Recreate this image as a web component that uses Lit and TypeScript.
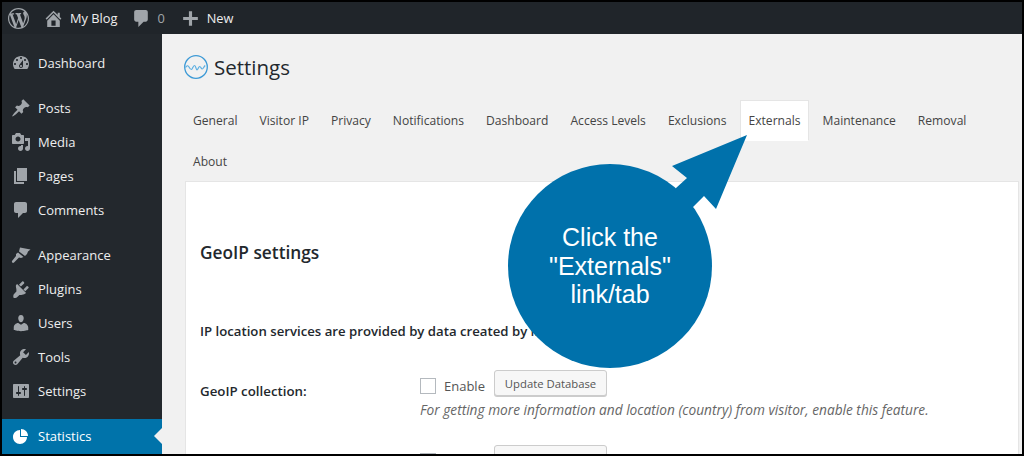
import { LitElement, html, css, svg } from "lit";
import { customElement } from "lit/decorators.js";

const I: Record<string, string> = {
  wp: "M20 10c0-5.51-4.49-10-10-10C4.48 0 0 4.49 0 10c0 5.52 4.48 10 10 10 5.51 0 10-4.48 10-10zM7.78 15.37L4.37 6.22c.55-.02 1.17-.08 1.17-.08.5-.06.44-1.13-.06-1.11 0 0-1.45.11-2.37.11-.18 0-.37 0-.58-.01C4.12 2.69 6.87 1.11 10 1.11c2.33 0 4.45.87 6.05 2.34-.68-.11-1.65.39-1.65 1.58 0 .74.45 1.36.9 2.1.35.61.55 1.36.55 2.46 0 1.49-1.4 5-1.4 5l-3.03-8.37c.54-.02.82-.17.82-.17.5-.05.44-1.25-.06-1.22 0 0-1.44.12-2.38.12-.87 0-2.33-.12-2.33-.12-.5-.03-.56 1.2-.06 1.22l.92.08 1.26 3.41zM17.41 10c.24-.64.74-1.87.43-4.25.7 1.29 1.05 2.71 1.05 4.25 0 3.29-1.73 6.24-4.4 7.78.97-2.59 1.94-5.2 2.92-7.78zM6.1 18.09C3.12 16.65 1.11 13.53 1.11 10c0-1.3.23-2.48.72-3.59C3.25 10.3 4.67 14.2 6.1 18.09zm4.03-6.63l2.58 6.98c-.86.29-1.76.45-2.71.45-.79 0-1.57-.11-2.29-.33.81-2.38 1.62-4.74 2.42-7.1z",
  home: "M16 8.5l1.53 1.53-1.06 1.06L10 4.62l-6.47 6.47-1.06-1.06L10 2.5l4 4v-2h2v4zm-6-2.46l6 5.99V18H4v-5.97zM12 17v-5H8v5h4z",
  comment: "M5 2h9c1.1 0 2 .9 2 2v7c0 1.1-.9 2-2 2h-2l-5 5v-5H5c-1.1 0-2-.9-2-2V4c0-1.1.9-2 2-2z",
  plus: "M17 8.5v3h-5.5V17h-3v-5.5H3v-3h5.5V3h3v5.5z",
  dashboard: "M3.76 16h12.48c1.1-1.37 1.76-3.11 1.76-5 0-4.42-3.58-8-8-8s-8 3.58-8 8c0 1.89.66 3.63 1.76 5zM10 4c.55 0 1 .45 1 1s-.45 1-1 1-1-.45-1-1 .45-1 1-1zM6 6c.55 0 1 .45 1 1s-.45 1-1 1-1-.45-1-1 .45-1 1-1zm8 0c.55 0 1 .45 1 1s-.45 1-1 1-1-.45-1-1 .45-1 1-1zm-5.37 5.55L12 7v6c0 1.1-.9 2-2 2s-2-.9-2-2c0-.57.24-1.08.63-1.45zM4 10c.55 0 1 .45 1 1s-.45 1-1 1-1-.45-1-1 .45-1 1-1zm12 0c.55 0 1 .45 1 1s-.45 1-1 1-1-.45-1-1 .45-1 1-1zm-5 3c0-.55-.45-1-1-1s-1 .45-1 1 .45 1 1 1 1-.45 1-1z",
  post: "M10.44 3.02l1.82-1.82 6.36 6.35-1.83 1.82c-1.05-.68-2.48-.57-3.41.36l-.75.75c-.92.93-1.04 2.35-.35 3.41l-1.83 1.82-2.41-2.41-2.8 2.79c-.42.42-3.38 2.71-3.8 2.29s1.86-3.39 2.28-3.81l2.79-2.79L4.1 9.36l1.83-1.82c1.05.69 2.48.57 3.4-.36l.75-.75c.93-.92 1.05-2.35.36-3.41z",
  media: "M13 11V4c0-.55-.45-1-1-1h-1.67L9 1H5L3.67 3H2c-.55 0-1 .45-1 1v7c0 .55.45 1 1 1h10c.55 0 1-.45 1-1zM7 4.5c1.38 0 2.5 1.12 2.5 2.5S8.38 9.5 7 9.5 4.5 8.38 4.5 7 5.62 4.5 7 4.5zM14 6h5v10.5c0 1.38-1.12 2.5-2.5 2.5S14 17.88 14 16.5s1.12-2.5 2.5-2.5c.17 0 .34.02.5.05V9h-3V6zm-4 8.05V13h2v3.5c0 1.38-1.12 2.5-2.5 2.5S7 17.88 7 16.5 8.12 14 9.5 14c.17 0 .34.02.5.05z",
  page: "M6 15V2h10v13H6zm-1 1h8v2H3V5h2v11z",
  appearance: "M9 2.5L19.5 4.5 17 6.5 16 9l-2 2-6-4.5zM7 7.5L12.5 12 10 13l-2-.5-5 5c-1 1-2.5 0-2-1.5l4-5V9z",
  plugin: "M13.1 4.4L9.9 7.6 8 5.7l3.2-3.2c.35-.35 1.05-.2 1.55.3.5.5.65 1.2.35 1.6zM17.5 9.1l-3.2 3.2-1.9-1.9 3.2-3.2c.35-.35 1.05-.2 1.55.3.5.5.7 1.25.35 1.6zM5.1 6.1l1-1.1 9 9-1.2.8c-.7.7-2.6 1.2-3.7 1.2H8.4l-2.6 2.6c-.6.6-3.1.3-3.3.1-.3-.3-.3-2.8.3-3.4l2.6-2.7V10.8c0-1.1-1-4-.3-4.7z",
  users: "M10 9.25c-2.27 0-2.73-3.44-2.73-3.44C7 4.02 7.82 2 9.97 2c2.16 0 2.98 2.02 2.71 3.81 0 0-.41 3.44-2.68 3.44zm0 2.57L12.72 10c2.39 0 4.52 2.33 4.52 4.53v2.49s-3.65 1.13-7.24 1.13c-3.65 0-7.24-1.13-7.24-1.13v-2.49c0-2.25 1.94-4.48 4.47-4.48z",
  tools: "M16.68 9.77c-1.34 1.34-3.3 1.67-4.95.99l-5.41 6.52c-.99.99-2.59.99-3.58 0s-.99-2.59 0-3.57l6.52-5.42c-.68-1.65-.35-3.61.99-4.95 1.28-1.28 3.12-1.62 4.72-1.06l-2.89 2.89 2.82 2.82 2.86-2.87c.53 1.58.18 3.39-1.08 4.65zM3.81 16.21c.4.39 1.04.39 1.43 0 .4-.4.4-1.04 0-1.43-.39-.4-1.03-.4-1.43 0-.39.39-.39 1.03 0 1.43z",
  settings: "M18 16V4c0-.55-.45-1-1-1H3c-.55 0-1 .45-1 1v12c0 .55.45 1 1 1h14c.55 0 1-.45 1-1zM8 11h1c.55 0 1 .45 1 1s-.45 1-1 1H8v1.5c0 .28-.22.5-.5.5s-.5-.22-.5-.5V13H6c-.55 0-1-.45-1-1s.45-1 1-1h1V5.5c0-.28.22-.5.5-.5s.5.22.5.5V11zm5-2h-1c-.55 0-1-.45-1-1s.45-1 1-1h1V5.5c0-.28.22-.5.5-.5s.5.22.5.5V7h1c.55 0 1 .45 1 1s-.45 1-1 1h-1v5.5c0 .28-.22.5-.5.5s-.5-.22-.5-.5V9z",
  pie: "M10 10V3c3.87 0 7 3.13 7 7h-7zM9 11V4c-3.87 0-7 3.13-7 7s3.13 7 7 7 7-3.13 7-7H9z",
};

const icon = (name: string, cls = "ico") =>
  html`<svg class=${cls} viewBox="0 0 20 20" aria-hidden="true">${svg`<path fill-rule="evenodd" d=${I[name]}></path>`}</svg>`;

const menu: { label: string; icon: string; sep?: boolean; current?: boolean }[] = [
  { label: "Dashboard", icon: "dashboard" },
  { label: "Posts", icon: "post", sep: true },
  { label: "Media", icon: "media" },
  { label: "Pages", icon: "page" },
  { label: "Comments", icon: "comment" },
  { label: "Appearance", icon: "appearance", sep: true },
  { label: "Plugins", icon: "plugin" },
  { label: "Users", icon: "users" },
  { label: "Tools", icon: "tools" },
  { label: "Settings", icon: "settings" },
  { label: "Statistics", icon: "pie", sep: true, current: true },
];

const tabs = ["General", "Visitor IP", "Privacy", "Notifications", "Dashboard", "Access Levels", "Exclusions", "Externals", "Maintenance", "Removal", "About"];

@customElement("app-root")
export class AppRoot extends LitElement {
  static styles = css`
    :host {
      display: block;
      position: relative;
      width: 1024px;
      height: 456px;
      box-sizing: border-box;
      border: 2px solid #000;
      overflow: hidden;
      background: #f1f1f1;
      font-family: "Open Sans", "Noto Sans", sans-serif;
      font-size: 13px;
    }
    .bar {
      height: 32px;
      background: #20252a;
      display: flex;
      align-items: center;
      color: #eee;
      font-size: 12.8px;
    }
    .bar span { display: flex; align-items: center; }
    .bar .ico { width: 21px; height: 21px; fill: #a0a5aa; flex: none; }
    .bar .logo { width: 21px; height: 21px; margin-left: 6px; fill: #a0a5aa; flex: none; }
    .home { margin-left: 14px; }
    .blog { margin-left: 6px; }
    .cm { margin-left: 14px; }
    .count { margin-left: 5px; color: #a0a5aa; }
    .pl { margin-left: 15px; }
    .new { margin-left: 6px; }
    .main { display: flex; height: 420px; }
    .side {
      width: 160px;
      flex: none;
      background: #23282d;
      padding-top: 12px;
      box-sizing: border-box;
    }
    .item {
      position: relative;
      height: 34px;
      display: flex;
      align-items: center;
      padding-left: 9px;
      gap: 7px;
      color: #eee;
    }
    .item .ico { width: 20px; height: 20px; fill: #a0a5aa; flex: none; }
    .item.sep { margin-top: 11px; }
    .item.current { background: #0073aa; color: #fff; height: 35px; padding-bottom: 1px; box-sizing: border-box; }
    .item.current .ico { fill: #fff; }
    .item.current::after {
      content: "";
      position: absolute;
      right: 0;
      top: 9px;
      border: 8px solid transparent;
      border-right-color: #f1f1f1;
      border-left-width: 0;
    }
    .content { flex: 1; min-width: 0; padding: 0 3px 0 22px; color: #23282d; }
    .title { height: 66px; display: flex; align-items: center; gap: 6px; }
    .title svg { width: 24px; height: 24px; flex: none; }
    .title h1 { margin: 0; font-size: 20.5px; font-weight: 500; color: #23282d; }
    .tabs { display: flex; flex-wrap: wrap; margin: 0 0 -1px 1px; column-gap: 6px; }
    .tab {
      height: 41px;
      box-sizing: border-box;
      display: flex;
      align-items: center;
      padding: 0 8px;
      font-size: 12.1px;
      color: #444;
    }
    .tab.active { background: #fff; border: 1px solid #e5e5e5; border-bottom-color: #fff; padding: 0 7px; }
    .card {
      margin-left: 1px;
      background: #fff;
      border: 1px solid #e5e5e5;
      border-width: 1px 1px 0 1px;
      padding: 59px 14px 0 14px;
      height: 300px;
      box-sizing: border-box;
    }
    h2 { margin: 0; font-size: 17.3px; line-height: 24px; font-weight: 600; color: #23282d; }
    .info { margin: 56px 0 0; line-height: 20px; font-weight: 600; color: #23282d; font-size: 13.2px; white-space: nowrap; }
    .row { display: grid; grid-template-columns: 220px 1fr; }
    .row.first { margin-top: 29px; }
    .row.next { margin-top: 25px; }
    .label { padding-top: 11px; line-height: 20px; font-weight: 600; font-size: 13.3px; color: #23282d; }
    .ctrl { display: flex; align-items: flex-start; color: #555; }
    .box { width: 16px; height: 16px; box-sizing: border-box; border: 1px solid #b4b9be; background: #fff; margin-top: 8px; flex: none; }
    .en { margin: 6px 0 0 8px; line-height: 20px; width: 50px; flex: none; }
    .btn {
      height: 26px;
      width: 113px;
      box-sizing: border-box;
      display: flex;
      align-items: center;
      justify-content: center;
      background: #f7f7f7;
      border: 1px solid #ccc;
      border-radius: 3px;
      box-shadow: 0 1px 0 #ccc;
      color: #555;
      font-size: 11.3px;
    }
    .desc { margin-top: 4px; line-height: 20px; font-style: italic; color: #666; font-size: 13.7px; white-space: nowrap; }
    .arrow { position: absolute; left: -2px; top: -2px; width: 1024px; height: 456px; pointer-events: none; }
    .arrow polygon { fill: #0071ab; }
    .circle {
      position: absolute;
      left: 506px;
      top: 162px;
      width: 204px;
      height: 204px;
      border-radius: 50%;
      background: #0071ab;
      color: #fff;
      display: flex;
      align-items: center;
      justify-content: center;
      text-align: center;
      font-family: "Liberation Sans", Arial, sans-serif;
      font-size: 25px;
      line-height: 28.5px;
    }
  `;

  render() {
    return html`
      <div class="bar">
        ${icon("wp", "logo")}
        <span class="home">${icon("home")}</span>
        <span class="blog">My Blog</span>
        <span class="cm">${icon("comment")}</span>
        <span class="count">0</span>
        <span class="pl">${icon("plus")}</span>
        <span class="new">New</span>
      </div>
      <div class="main">
        <nav class="side">
          ${menu.map(
            (m) => html`<div class="item ${m.sep ? "sep" : ""} ${m.current ? "current" : ""}">${icon(m.icon)}<span>${m.label}</span></div>`
          )}
        </nav>
        <main class="content">
          <div class="title">
            <svg viewBox="0 0 24 24" aria-hidden="true">
              <circle cx="12" cy="12" r="11.3" fill="none" stroke="#3d9ad6" stroke-width="1.3"></circle>
              <path d="M1.5 12.5c1.5-2 2.5-2.5 3.5-.5s1.5 2.5 2.500 2.500 1.500-4 3-4 1.500 4.500 2.500 4.500 1.500-3.500 2.700-3.500 1.500 2.500 2.500 2.500 1.500-2 3-3.500" fill="none" stroke="#5aaee2" stroke-width="1.2"></path>
            </svg>
            <h1>Settings</h1>
          </div>
          <div class="tabs">
            ${tabs.map((t) => html`<div class="tab ${t === "Externals" ? "active" : ""}">${t}</div>`)}
          </div>
          <section class="card">
            <h2>GeoIP settings</h2>
            <p class="info">IP location services are provided by data created by MaxMind.</p>
            <div class="row first">
              <div class="label">GeoIP collection:</div>
              <div>
                <div class="ctrl"><span class="box"></span><span class="en">Enable</span><span class="btn">Update Database</span></div>
                <div class="desc">For getting more information and location (country) from visitor, enable this feature.</div>
              </div>
            </div>
            <div class="row next">
              <div class="label"></div>
              <div class="ctrl"><span class="box"></span><span class="en">Enable</span><span class="btn">Update Database</span></div>
            </div>
          </section>
        </main>
      </div>
      <svg class="arrow" viewBox="0 0 1024 456" aria-hidden="true"><polygon points="747,135 716,209 704,196 693,207 660,230 676,188 687,178 672,166"></polygon></svg>
      <div class="circle"><div>Click the<br />"Externals"<br />link/tab</div></div>
    `;
  }
}
